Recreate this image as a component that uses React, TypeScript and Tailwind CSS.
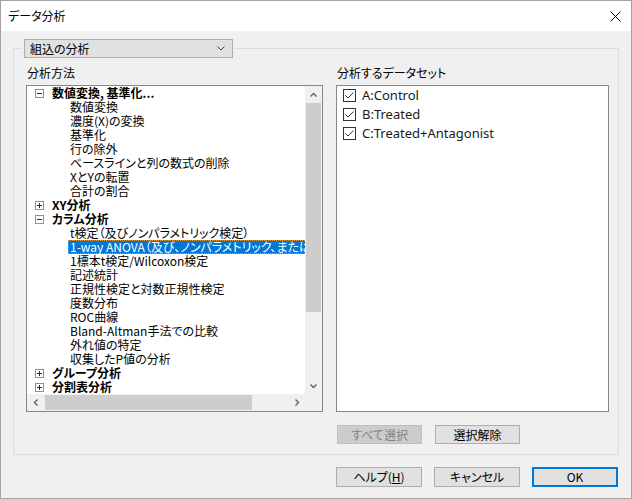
import { useState } from 'react'

type Group = { label: string; open: boolean; children?: string[] }

const groups: Group[] = [
  {
    label: '数値変換, 基準化...',
    open: true,
    children: ['数値変換', '濃度(X)の変換', '基準化', '行の除外', 'ベースラインと列の数式の削除', 'XとYの転置', '合計の割合'],
  },
  { label: 'XY分析', open: false },
  {
    label: 'カラム分析',
    open: true,
    children: [
      't検定（及びノンパラメトリック検定）',
      '1-way ANOVA（及び、ノンパラメトリック、または混合モデル）',
      '1標本t検定/Wilcoxon検定',
      '記述統計',
      '正規性検定と対数正規性検定',
      '度数分布',
      'ROC曲線',
      'Bland-Altman手法での比較',
      '外れ値の特定',
      '収集したP値の分析',
    ],
  },
  { label: 'グループ分析', open: false },
  { label: '分割表分析', open: false },
]

const datasets = ['A:Control', 'B:Treated', 'C:Treated+Antagonist']

function Chevron({ dir }: { dir: 'up' | 'down' | 'left' | 'right' }) {
  const pts = {
    up: '0.5,4.5 3.5,1.5 6.5,4.5',
    down: '0.5,1.5 3.5,4.5 6.5,1.5',
    left: '4.5,0.5 1.5,3.5 4.5,6.5',
    right: '1.5,0.5 4.5,3.5 1.5,6.5',
  }[dir]
  const vertical = dir === 'up' || dir === 'down'
  return (
    <svg width={vertical ? 7 : 6} height={vertical ? 6 : 7} viewBox={vertical ? '0 0 7 6' : '0 0 6 7'}>
      <polyline points={pts} fill="none" stroke="#606060" strokeWidth="1.4" />
    </svg>
  )
}

function ToggleBox({ open }: { open: boolean }) {
  return (
    <svg width="9" height="9" viewBox="0 0 9 9" className="shrink-0">
      <rect x="0.5" y="0.5" width="8" height="8" fill="#fff" stroke="#919191" />
      <line x1="2" y1="4.5" x2="7" y2="4.5" stroke="#1e2a3a" />
      {!open && <line x1="4.5" y1="2" x2="4.5" y2="7" stroke="#1e2a3a" />}
    </svg>
  )
}

function Tree({ selected }: { selected: string }) {
  return (
    <div className="overflow-hidden text-[12px] leading-[14px]">
      {groups.map((g) => (
        <div key={g.label}>
          <div className="flex h-[14px] items-center pl-[8px]">
            <ToggleBox open={g.open} />
            <span className="ml-[8px] whitespace-nowrap font-bold">{g.label}</span>
          </div>
          {g.open &&
            g.children?.map((c) =>
              c === selected ? (
                <div key={c} className="flex h-[14px] items-center">
                  <span className="ml-[41px] h-[14px] whitespace-nowrap border border-dotted border-[#e49b3c] bg-[#0078d7] px-[1px] leading-[12px] text-white">
                    {c}
                  </span>
                </div>
              ) : (
                <div key={c} className="flex h-[14px] items-center whitespace-nowrap pl-[43px]">
                  {c}
                </div>
              )
            )}
        </div>
      ))}
    </div>
  )
}

function Button({ children, disabled, primary, small }: { children: React.ReactNode; disabled?: boolean; primary?: boolean; small?: boolean }) {
  return (
    <button
      className={
        (small ? 'h-[19px] w-[85px] ' : 'h-[20px] w-[86px] ') +
        'flex items-center justify-center text-[12px] leading-none ' +
        (disabled
          ? 'border border-[#bfbfbf] bg-[#cccccc] text-[#838383]'
          : primary
            ? 'border-2 border-[#0078d7] bg-[#e1e1e1]'
            : 'border border-[#adadad] bg-[#e1e1e1]')
      }
    >
      {children}
    </button>
  )
}

export default function App() {
  const [checked, setChecked] = useState([true, true, true])

  return (
    <div className="flex h-[499px] w-[632px] flex-col overflow-hidden border border-[#a3a3a3] bg-[#f0f0f0] font-['Noto_Sans_CJK_JP',sans-serif] text-black [font-feature-settings:'palt']">
      {/* Title bar */}
      <div className="flex h-[30px] items-center bg-white pl-[7px] pr-[10px] text-[12px]">
        <span>データ分析</span>
        <svg width="11" height="11" viewBox="0 0 11 11" className="ml-auto">
          <path d="M0.5 0.5 L10.5 10.5 M10.5 0.5 L0.5 10.5" stroke="#000" strokeWidth="1" />
        </svg>
      </div>

      <div className="flex flex-1 flex-col pl-[12px]">
        <fieldset className="mt-[8px] w-[606px] border border-[#dcdcdc] pb-[10px] pl-[12px] pr-[9px]">
          <legend className="-ml-[4px] px-[2px]">
            <div className="flex h-[19px] w-[209px] items-center justify-between border border-[#adadad] bg-[#e1e1e1] pl-[5px] pr-[7px] text-[12px]">
              <span>組込の分析</span>
              <svg width="8" height="5" viewBox="0 0 8 5">
                <polyline points="0.5,0.5 4,4 7.5,0.5" fill="none" stroke="#444" />
              </svg>
            </div>
          </legend>

          <div className="flex gap-[13px]">
            {/* 分析方法 */}
            <div className="w-[297px]">
              <div className="pb-[5px] pl-[1px] pt-[8px] text-[12px] leading-[14px]">分析方法</div>
              <div className="grid h-[327px] grid-cols-[1fr_17px] grid-rows-[1fr_17px] border border-[#828790] bg-white">
                <Tree selected="1-way ANOVA（及び、ノンパラメトリック、または混合モデル）" />
                <div className="flex flex-col bg-[#f0f0f0]">
                  <div className="flex h-[17px] items-center justify-center">
                    <Chevron dir="up" />
                  </div>
                  <div className="mx-[1px] h-[209px] bg-[#cdcdcd]" />
                  <div className="flex-1" />
                  <div className="flex h-[17px] items-center justify-center">
                    <Chevron dir="down" />
                  </div>
                </div>
                <div className="flex bg-[#f0f0f0]">
                  <div className="flex w-[17px] items-center justify-center">
                    <Chevron dir="left" />
                  </div>
                  <div className="my-[1px] ml-[1px] w-[207px] bg-[#cdcdcd]" />
                  <div className="flex-1" />
                  <div className="flex w-[17px] items-center justify-center">
                    <Chevron dir="right" />
                  </div>
                </div>
                <div className="bg-[#f0f0f0]" />
              </div>
            </div>

            {/* 分析するデータセット */}
            <div className="flex-1">
              <div className="pb-[5px] pl-[1px] pt-[8px] text-[12px] leading-[14px]">分析するデータセット</div>
              <div className="h-[327px] border border-[#828790] bg-white font-['Noto_Sans',sans-serif] text-[13px]">
                {datasets.map((d, i) => (
                  <label key={d} className="flex h-[19px] items-center pl-[6px]">
                    <span
                      onClick={() => setChecked(checked.map((c, j) => (j === i ? !c : c)))}
                      className="flex h-[13px] w-[13px] items-center justify-center border border-[#333] bg-white"
                    >
                      {checked[i] && (
                        <svg width="11" height="11" viewBox="0 0 11 11">
                          <polyline points="1.5,5.5 4,8 9.5,2.5" fill="none" stroke="#333" strokeWidth="1" />
                        </svg>
                      )}
                    </span>
                    <span className="ml-[6px] text-[#1a1a1a]">{d}</span>
                  </label>
                ))}
              </div>
              <div className="ml-[1px] mt-[13px] flex gap-[13px]">
                <Button small disabled>すべて選択</Button>
                <Button small>選択解除</Button>
              </div>
            </div>
          </div>
        </fieldset>

        <div className="mt-[12px] flex justify-end gap-[12px] pr-[13px]">
          <Button>
            ヘルプ(<span className="underline">H</span>)
          </Button>
          <Button>キャンセル</Button>
          <Button primary>OK</Button>
        </div>
      </div>
    </div>
  )
}
